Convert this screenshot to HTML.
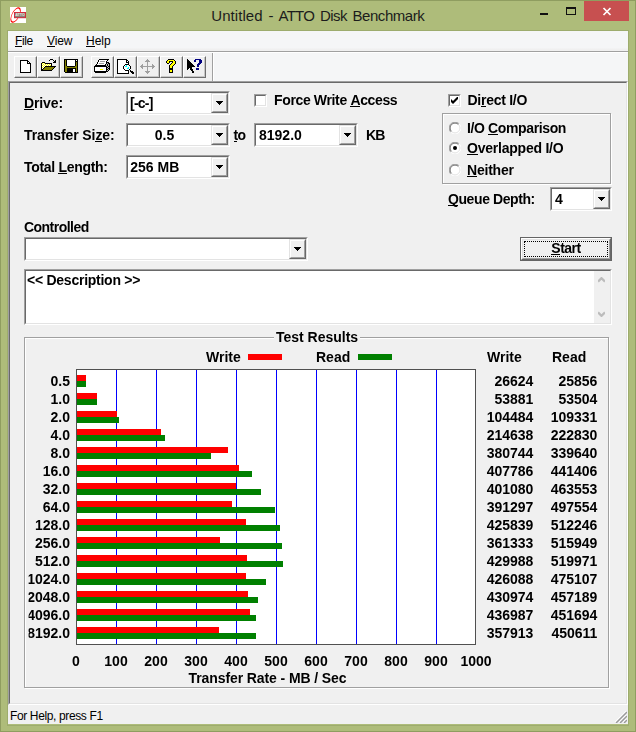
<!DOCTYPE html>
<html lang="en"><head><meta charset="utf-8"><title>Untitled - ATTO Disk Benchmark</title>
<style>
html,body{margin:0;padding:0}
body{width:636px;height:732px;overflow:hidden;background:#aebc7a;position:relative;font-family:"Liberation Sans",sans-serif;}
#win{position:absolute;left:0;top:0;width:636px;height:732px;background:#aebc7a;box-shadow:inset 0 0 0 1px #8f9d60}
.abs,.t,.bar,.grid,#win div,#win span.a{position:absolute}
.t{font:bold 14px/16px "Liberation Sans",sans-serif;color:#000;white-space:pre}
u{text-decoration:none;border-bottom:1px solid #000;display:inline-block;line-height:12px}
#title{left:0;top:6px;width:636px;height:20px;font:15px/20px "Liberation Sans",sans-serif;color:#1c1c1c}
.tw{top:0;white-space:pre}
#menubar{left:8px;top:31px;width:620px;height:20px;background:linear-gradient(#f5f6f7,#f5f6f7 17px,#f0f0f0 18px)}
.mi{top:2px;font:12px/16px "Liberation Sans",sans-serif;color:#000}
#tbsep1{left:8px;top:51px;width:620px;height:1px;background:#a0a0a0}
#tbsep2{left:8px;top:52px;width:620px;height:1px;background:#fff}
#toolbar{left:8px;top:53px;width:620px;height:28px;background:#f5f6f7}
#tbin{left:0;top:0;width:204px;height:28px;background:#f0f0f0;border-right:1px solid #a0a0a0;box-shadow:1px 0 0 #fff}
.tb{top:56px;width:21px;height:20px;border:1px solid;border-color:#fff #6e6e6e #6e6e6e #fff;background:#f0f0f0;box-shadow:inset -1px -1px 0 #c6c6c6}
#client{left:8px;top:81px;width:616px;height:620px;background:#f0f0f0;border:2px solid;border-color:#a0a0a0 #fff #fff #a0a0a0}
#client:before{content:"";position:absolute;left:-1px;top:-1px;right:-1px;bottom:-1px;border:1px solid;border-color:#696969 #e3e3e3 #e3e3e3 #696969}
#status{left:8px;top:705px;width:620px;height:19px;background:#f0f0f0}
#stext{left:2px;top:3px;font:12px/16px "Liberation Sans",sans-serif;letter-spacing:-0.37px;white-space:pre}
.combo{height:20px;background:#fff;border:2px solid;border-color:#a0a0a0 #fff #fff #a0a0a0}
.combo:before{content:"";position:absolute;left:-1px;top:-1px;right:-1px;bottom:-1px;border:1px solid;border-color:#696969 #e3e3e3 #e3e3e3 #696969}
.cbtn{right:0;top:0;width:13px;height:16px;background:#f0f0f0;border:2px solid;border-color:#fff #a0a0a0 #a0a0a0 #fff;outline:0}
.cbtn:before{content:"";position:absolute;left:-2px;top:-2px;right:-2px;bottom:-2px;border:1px solid;border-color:#e3e3e3 #696969 #696969 #e3e3e3}
.cbtn:after{content:"";position:absolute;left:3px;top:6px;width:7px;height:4px;background:#000;clip-path:polygon(0 0,7px 0,7px 1px,6px 1px,6px 2px,5px 2px,5px 3px,4px 3px,4px 4px,3px 4px,3px 3px,2px 3px,2px 2px,1px 2px,1px 1px,0 1px)}
.ctext{left:3px;top:2px}
.bar{left:77px;height:6px}
.r{background:#f00}.g{background:#008000}
.grid{top:370px;width:1px;height:274px;background:#00f}
.lab{left:0;width:70px;text-align:right;clip-path:inset(0 0 0 28.6px)}
.wv{left:433.4px;width:100px;text-align:right}
.rv{left:497.4px;width:100px;text-align:right}
.ax{top:653px;width:60px;text-align:center}
.gb{border:1px solid #a0a0a0;box-shadow:1px 1px 0 #fff, inset 1px 1px 0 #fff}

.chk{width:11px;height:11px;background:#fff;border:1px solid;border-color:#a0a0a0 #fff #fff #a0a0a0}
.chk:before{content:"";position:absolute;left:0;top:0;right:0;bottom:0;border:1px solid;border-color:#696969 #e3e3e3 #e3e3e3 #696969}
.radio{width:12px;height:12px}
.etch{border:1px solid #a0a0a0;box-shadow:1px 1px 0 #fff, inset 1px 1px 0 #fff}
.sunk{background:#fff;border:2px solid;border-color:#a0a0a0 #fff #fff #a0a0a0}
.sunk:before{content:"";position:absolute;left:-1px;top:-1px;right:-1px;bottom:-1px;border:1px solid;border-color:#696969 #e3e3e3 #e3e3e3 #696969}
#start{left:520px;top:237px;width:90px;height:22px;border:1px solid #646464;background:#f0f0f0}
#start:before{content:"";position:absolute;left:0;top:0;right:0;bottom:0;border:1px solid;border-color:#fff #696969 #696969 #fff}
#start:after{content:"";position:absolute;left:1px;top:1px;right:1px;bottom:1px;border:1px solid;border-color:#e3e3e3 #a0a0a0 #a0a0a0 #e3e3e3}
#focus{left:3px;top:3px;right:3px;bottom:3px;border:1px dotted #000}

#close{left:584px;top:1px;width:45px;height:20px;background:#c75050}
.mi u{line-height:10px}
#dlg{left:0;top:0;width:636px;height:732px;will-change:transform}

</style></head>
<body>
<div id="win">
<div id="title"><span class="a tw" style="left:211.3px;letter-spacing:0.055px">Untitled</span> <span class="a tw" style="left:268.5px;letter-spacing:-0.300px">-</span> <span class="a tw" style="left:278.6px;letter-spacing:-0.800px">ATTO</span> <span class="a tw" style="left:319.9px;letter-spacing:-0.543px">Disk</span> <span class="a tw" style="left:352.6px;letter-spacing:-0.475px">Benchmark</span></div>
<svg class="abs" style="left:10px;top:7px" width="16" height="16" viewBox="0 0 16 16"><rect width="16" height="16" fill="#fff"/><g transform="rotate(27 5.6 8)"><path fill-rule="evenodd" fill="#f00" d="M1.7 8a3.9 8.5 0 1 0 7.8 0a3.9 8.5 0 1 0 -7.8 0zM2.25 8a3.35 7.1 0 1 0 6.7 0a3.35 7.1 0 1 0 -6.7 0z"/></g><rect x="4" y="5" width="12" height="6.2" fill="#d32c3c"/><rect x="5" y="6" width="10" height="4.2" fill="#8c8078"/><text x="10" y="9.4" font-family="Liberation Sans, sans-serif" font-weight="bold" font-size="3.6" text-anchor="middle" fill="#eee6e0">ATTO</text></svg>
<div style="left:540px;top:13px;width:8px;height:2px;background:#111"></div>
<div style="left:566px;top:7px;width:8px;height:5px;border:1px solid #111;border-top-width:2px"></div>
<div id="close"><svg class="abs" style="left:18px;top:6px" width="10" height="9" viewBox="0 0 10 9"><path d="M1.5 1L8.5 8M8.5 1L1.5 8" stroke="#fff" stroke-width="1.7" fill="none"/></svg></div>
<div style="left:7px;top:30px;width:620px;height:694px;border:1px solid #9dac6d"></div>
<div id="menubar"><span class="a mi" style="left:7px;letter-spacing:-0.35px"><u>F</u>ile</span><span class="a mi" style="left:39px;letter-spacing:-0.2px"><u>V</u>iew</span><span class="a mi" style="left:78px"><u>H</u>elp</span></div>
<div id="tbsep1"></div><div id="tbsep2"></div>
<div id="toolbar"><div id="tbin"></div></div>
<div class="tb" style="left:14px"></div><div class="tb" style="left:37px"></div><div class="tb" style="left:60px"></div>
<div class="tb" style="left:91px"></div><div class="tb" style="left:114px"></div><div class="tb" style="left:137px"></div><div class="tb" style="left:160px"></div><div class="tb" style="left:183px"></div>
<svg class="abs" style="left:20px;top:60px" width="11" height="13" viewBox="0 0 11 13" shape-rendering="crispEdges"><rect x="0" y="0" width="8" height="1" fill="#000"/><rect x="0" y="1" width="1" height="1" fill="#000"/><rect x="1" y="1" width="6" height="1" fill="#fff"/><rect x="7" y="1" width="2" height="1" fill="#000"/><rect x="0" y="2" width="1" height="1" fill="#000"/><rect x="1" y="2" width="6" height="1" fill="#fff"/><rect x="7" y="2" width="1" height="1" fill="#000"/><rect x="8" y="2" width="1" height="1" fill="#fff"/><rect x="9" y="2" width="1" height="1" fill="#000"/><rect x="0" y="3" width="1" height="1" fill="#000"/><rect x="1" y="3" width="6" height="1" fill="#fff"/><rect x="7" y="3" width="4" height="1" fill="#000"/><rect x="0" y="4" width="1" height="1" fill="#000"/><rect x="1" y="4" width="9" height="1" fill="#fff"/><rect x="10" y="4" width="1" height="1" fill="#000"/><rect x="0" y="5" width="1" height="1" fill="#000"/><rect x="1" y="5" width="9" height="1" fill="#fff"/><rect x="10" y="5" width="1" height="1" fill="#000"/><rect x="0" y="6" width="1" height="1" fill="#000"/><rect x="1" y="6" width="9" height="1" fill="#fff"/><rect x="10" y="6" width="1" height="1" fill="#000"/><rect x="0" y="7" width="1" height="1" fill="#000"/><rect x="1" y="7" width="9" height="1" fill="#fff"/><rect x="10" y="7" width="1" height="1" fill="#000"/><rect x="0" y="8" width="1" height="1" fill="#000"/><rect x="1" y="8" width="9" height="1" fill="#fff"/><rect x="10" y="8" width="1" height="1" fill="#000"/><rect x="0" y="9" width="1" height="1" fill="#000"/><rect x="1" y="9" width="9" height="1" fill="#fff"/><rect x="10" y="9" width="1" height="1" fill="#000"/><rect x="0" y="10" width="1" height="1" fill="#000"/><rect x="1" y="10" width="9" height="1" fill="#fff"/><rect x="10" y="10" width="1" height="1" fill="#000"/><rect x="0" y="11" width="1" height="1" fill="#000"/><rect x="1" y="11" width="9" height="1" fill="#fff"/><rect x="10" y="11" width="1" height="1" fill="#000"/><rect x="0" y="12" width="11" height="1" fill="#000"/></svg><svg class="abs" style="left:41px;top:59px" width="16" height="12" viewBox="0 0 16 12" shape-rendering="crispEdges"><rect x="9" y="0" width="3" height="1" fill="#000"/><rect x="8" y="1" width="1" height="1" fill="#000"/><rect x="12" y="1" width="1" height="1" fill="#000"/><rect x="14" y="1" width="1" height="1" fill="#000"/><rect x="13" y="2" width="2" height="1" fill="#000"/><rect x="1" y="3" width="3" height="1" fill="#000"/><rect x="12" y="3" width="3" height="1" fill="#000"/><rect x="0" y="4" width="1" height="1" fill="#000"/><rect x="1" y="4" width="1" height="1" fill="#ff0"/><rect x="2" y="4" width="1" height="1" fill="#fff"/><rect x="3" y="4" width="1" height="1" fill="#ff0"/><rect x="4" y="4" width="7" height="1" fill="#000"/><rect x="0" y="5" width="1" height="1" fill="#000"/><rect x="1" y="5" width="1" height="1" fill="#fff"/><rect x="2" y="5" width="1" height="1" fill="#ff0"/><rect x="3" y="5" width="1" height="1" fill="#fff"/><rect x="4" y="5" width="1" height="1" fill="#ff0"/><rect x="5" y="5" width="1" height="1" fill="#fff"/><rect x="6" y="5" width="1" height="1" fill="#ff0"/><rect x="7" y="5" width="1" height="1" fill="#fff"/><rect x="8" y="5" width="1" height="1" fill="#ff0"/><rect x="9" y="5" width="1" height="1" fill="#fff"/><rect x="10" y="5" width="1" height="1" fill="#000"/><rect x="0" y="6" width="1" height="1" fill="#000"/><rect x="1" y="6" width="1" height="1" fill="#ff0"/><rect x="2" y="6" width="1" height="1" fill="#fff"/><rect x="3" y="6" width="1" height="1" fill="#ff0"/><rect x="4" y="6" width="1" height="1" fill="#fff"/><rect x="5" y="6" width="1" height="1" fill="#ff0"/><rect x="6" y="6" width="1" height="1" fill="#fff"/><rect x="7" y="6" width="1" height="1" fill="#ff0"/><rect x="8" y="6" width="1" height="1" fill="#fff"/><rect x="9" y="6" width="1" height="1" fill="#ff0"/><rect x="10" y="6" width="1" height="1" fill="#000"/><rect x="0" y="7" width="1" height="1" fill="#000"/><rect x="1" y="7" width="1" height="1" fill="#fff"/><rect x="2" y="7" width="1" height="1" fill="#ff0"/><rect x="3" y="7" width="1" height="1" fill="#fff"/><rect x="4" y="7" width="11" height="1" fill="#000"/><rect x="0" y="8" width="1" height="1" fill="#000"/><rect x="1" y="8" width="1" height="1" fill="#ff0"/><rect x="2" y="8" width="1" height="1" fill="#fff"/><rect x="3" y="8" width="1" height="1" fill="#000"/><rect x="4" y="8" width="9" height="1" fill="#808000"/><rect x="13" y="8" width="1" height="1" fill="#000"/><rect x="0" y="9" width="1" height="1" fill="#000"/><rect x="1" y="9" width="1" height="1" fill="#fff"/><rect x="2" y="9" width="1" height="1" fill="#000"/><rect x="3" y="9" width="9" height="1" fill="#808000"/><rect x="12" y="9" width="1" height="1" fill="#000"/><rect x="0" y="10" width="2" height="1" fill="#000"/><rect x="2" y="10" width="9" height="1" fill="#808000"/><rect x="11" y="10" width="1" height="1" fill="#000"/><rect x="0" y="11" width="11" height="1" fill="#000"/></svg><svg class="abs" style="left:64px;top:59px" width="14" height="14" viewBox="0 0 14 14" shape-rendering="crispEdges"><rect x="0" y="0" width="14" height="1" fill="#000"/><rect x="0" y="1" width="1" height="1" fill="#000"/><rect x="1" y="1" width="1" height="1" fill="#808000"/><rect x="2" y="1" width="1" height="1" fill="#000"/><rect x="3" y="1" width="8" height="1" fill="#fff"/><rect x="11" y="1" width="1" height="1" fill="#000"/><rect x="12" y="1" width="1" height="1" fill="#fff"/><rect x="13" y="1" width="1" height="1" fill="#000"/><rect x="0" y="2" width="1" height="1" fill="#000"/><rect x="1" y="2" width="1" height="1" fill="#808000"/><rect x="2" y="2" width="1" height="1" fill="#000"/><rect x="3" y="2" width="8" height="1" fill="#fff"/><rect x="11" y="2" width="3" height="1" fill="#000"/><rect x="0" y="3" width="1" height="1" fill="#000"/><rect x="1" y="3" width="1" height="1" fill="#808000"/><rect x="2" y="3" width="1" height="1" fill="#000"/><rect x="3" y="3" width="8" height="1" fill="#fff"/><rect x="11" y="3" width="1" height="1" fill="#000"/><rect x="12" y="3" width="1" height="1" fill="#808000"/><rect x="13" y="3" width="1" height="1" fill="#000"/><rect x="0" y="4" width="1" height="1" fill="#000"/><rect x="1" y="4" width="1" height="1" fill="#808000"/><rect x="2" y="4" width="1" height="1" fill="#000"/><rect x="3" y="4" width="8" height="1" fill="#fff"/><rect x="11" y="4" width="1" height="1" fill="#000"/><rect x="12" y="4" width="1" height="1" fill="#808000"/><rect x="13" y="4" width="1" height="1" fill="#000"/><rect x="0" y="5" width="1" height="1" fill="#000"/><rect x="1" y="5" width="1" height="1" fill="#808000"/><rect x="2" y="5" width="1" height="1" fill="#000"/><rect x="3" y="5" width="8" height="1" fill="#fff"/><rect x="11" y="5" width="1" height="1" fill="#000"/><rect x="12" y="5" width="1" height="1" fill="#808000"/><rect x="13" y="5" width="1" height="1" fill="#000"/><rect x="0" y="6" width="1" height="1" fill="#000"/><rect x="1" y="6" width="1" height="1" fill="#808000"/><rect x="2" y="6" width="1" height="1" fill="#000"/><rect x="3" y="6" width="8" height="1" fill="#fff"/><rect x="11" y="6" width="1" height="1" fill="#000"/><rect x="12" y="6" width="1" height="1" fill="#808000"/><rect x="13" y="6" width="1" height="1" fill="#000"/><rect x="0" y="7" width="1" height="1" fill="#000"/><rect x="1" y="7" width="2" height="1" fill="#808000"/><rect x="3" y="7" width="8" height="1" fill="#000"/><rect x="11" y="7" width="2" height="1" fill="#808000"/><rect x="13" y="7" width="1" height="1" fill="#000"/><rect x="0" y="8" width="1" height="1" fill="#000"/><rect x="1" y="8" width="12" height="1" fill="#808000"/><rect x="13" y="8" width="1" height="1" fill="#000"/><rect x="0" y="9" width="1" height="1" fill="#000"/><rect x="1" y="9" width="2" height="1" fill="#808000"/><rect x="3" y="9" width="9" height="1" fill="#000"/><rect x="12" y="9" width="1" height="1" fill="#808000"/><rect x="13" y="9" width="1" height="1" fill="#000"/><rect x="0" y="10" width="1" height="1" fill="#000"/><rect x="1" y="10" width="2" height="1" fill="#808000"/><rect x="3" y="10" width="6" height="1" fill="#000"/><rect x="9" y="10" width="2" height="1" fill="#fff"/><rect x="11" y="10" width="1" height="1" fill="#000"/><rect x="12" y="10" width="1" height="1" fill="#808000"/><rect x="13" y="10" width="1" height="1" fill="#000"/><rect x="0" y="11" width="1" height="1" fill="#000"/><rect x="1" y="11" width="2" height="1" fill="#808000"/><rect x="3" y="11" width="6" height="1" fill="#000"/><rect x="9" y="11" width="2" height="1" fill="#fff"/><rect x="11" y="11" width="1" height="1" fill="#000"/><rect x="12" y="11" width="1" height="1" fill="#808000"/><rect x="13" y="11" width="1" height="1" fill="#000"/><rect x="0" y="12" width="1" height="1" fill="#000"/><rect x="1" y="12" width="2" height="1" fill="#808000"/><rect x="3" y="12" width="6" height="1" fill="#000"/><rect x="9" y="12" width="2" height="1" fill="#fff"/><rect x="11" y="12" width="1" height="1" fill="#000"/><rect x="12" y="12" width="1" height="1" fill="#808000"/><rect x="13" y="12" width="1" height="1" fill="#000"/><rect x="1" y="13" width="13" height="1" fill="#000"/></svg><svg class="abs" style="left:94px;top:59px" width="16" height="14" viewBox="0 0 16 14" shape-rendering="crispEdges"><rect x="5" y="0" width="10" height="1" fill="#000"/><rect x="4" y="1" width="1" height="1" fill="#000"/><rect x="5" y="1" width="8" height="1" fill="#fff"/><rect x="13" y="1" width="1" height="1" fill="#000"/><rect x="4" y="2" width="1" height="1" fill="#000"/><rect x="5" y="2" width="1" height="1" fill="#fff"/><rect x="6" y="2" width="5" height="1" fill="#a0a0a0"/><rect x="11" y="2" width="1" height="1" fill="#fff"/><rect x="12" y="2" width="1" height="1" fill="#000"/><rect x="3" y="3" width="1" height="1" fill="#000"/><rect x="4" y="3" width="8" height="1" fill="#fff"/><rect x="12" y="3" width="3" height="1" fill="#000"/><rect x="3" y="4" width="1" height="1" fill="#000"/><rect x="4" y="4" width="1" height="1" fill="#fff"/><rect x="5" y="4" width="5" height="1" fill="#a0a0a0"/><rect x="10" y="4" width="2" height="1" fill="#fff"/><rect x="12" y="4" width="1" height="1" fill="#000"/><rect x="13" y="4" width="1" height="1" fill="#c0c0c0"/><rect x="14" y="4" width="2" height="1" fill="#000"/><rect x="2" y="5" width="1" height="1" fill="#000"/><rect x="3" y="5" width="8" height="1" fill="#fff"/><rect x="11" y="5" width="1" height="1" fill="#000"/><rect x="12" y="5" width="1" height="1" fill="#c0c0c0"/><rect x="13" y="5" width="1" height="1" fill="#000"/><rect x="14" y="5" width="1" height="1" fill="#c0c0c0"/><rect x="15" y="5" width="1" height="1" fill="#000"/><rect x="1" y="6" width="11" height="1" fill="#000"/><rect x="12" y="6" width="1" height="1" fill="#c0c0c0"/><rect x="13" y="6" width="1" height="1" fill="#000"/><rect x="14" y="6" width="1" height="1" fill="#c0c0c0"/><rect x="15" y="6" width="1" height="1" fill="#000"/><rect x="0" y="7" width="13" height="1" fill="#000"/><rect x="13" y="7" width="1" height="1" fill="#c0c0c0"/><rect x="14" y="7" width="2" height="1" fill="#000"/><rect x="0" y="8" width="1" height="1" fill="#000"/><rect x="1" y="8" width="11" height="1" fill="#fff"/><rect x="12" y="8" width="2" height="1" fill="#000"/><rect x="14" y="8" width="1" height="1" fill="#c0c0c0"/><rect x="15" y="8" width="1" height="1" fill="#000"/><rect x="0" y="9" width="1" height="1" fill="#000"/><rect x="1" y="9" width="11" height="1" fill="#fff"/><rect x="12" y="9" width="1" height="1" fill="#000"/><rect x="13" y="9" width="1" height="1" fill="#c0c0c0"/><rect x="14" y="9" width="2" height="1" fill="#000"/><rect x="0" y="10" width="1" height="1" fill="#000"/><rect x="1" y="10" width="5" height="1" fill="#fff"/><rect x="6" y="10" width="3" height="1" fill="#ff0"/><rect x="9" y="10" width="3" height="1" fill="#fff"/><rect x="12" y="10" width="2" height="1" fill="#000"/><rect x="14" y="10" width="1" height="1" fill="#c0c0c0"/><rect x="15" y="10" width="1" height="1" fill="#000"/><rect x="0" y="11" width="1" height="1" fill="#000"/><rect x="1" y="11" width="11" height="1" fill="#fff"/><rect x="12" y="11" width="1" height="1" fill="#000"/><rect x="13" y="11" width="1" height="1" fill="#c0c0c0"/><rect x="14" y="11" width="1" height="1" fill="#000"/><rect x="0" y="12" width="14" height="1" fill="#000"/><rect x="1" y="13" width="11" height="1" fill="#000"/></svg><svg class="abs" style="left:117px;top:59px" width="17" height="15" viewBox="0 0 17 15" shape-rendering="crispEdges"><rect x="0" y="0" width="10" height="1" fill="#000"/><rect x="0" y="1" width="1" height="1" fill="#000"/><rect x="1" y="1" width="8" height="1" fill="#fff"/><rect x="9" y="1" width="2" height="1" fill="#000"/><rect x="0" y="2" width="1" height="1" fill="#000"/><rect x="1" y="2" width="8" height="1" fill="#fff"/><rect x="9" y="2" width="1" height="1" fill="#000"/><rect x="10" y="2" width="1" height="1" fill="#fff"/><rect x="11" y="2" width="1" height="1" fill="#000"/><rect x="0" y="3" width="1" height="1" fill="#000"/><rect x="1" y="3" width="8" height="1" fill="#fff"/><rect x="9" y="3" width="3" height="1" fill="#000"/><rect x="0" y="4" width="1" height="1" fill="#000"/><rect x="1" y="4" width="10" height="1" fill="#fff"/><rect x="11" y="4" width="1" height="1" fill="#000"/><rect x="0" y="5" width="1" height="1" fill="#000"/><rect x="1" y="5" width="7" height="1" fill="#fff"/><rect x="8" y="5" width="4" height="1" fill="#000"/><rect x="0" y="6" width="1" height="1" fill="#000"/><rect x="1" y="6" width="6" height="1" fill="#fff"/><rect x="7" y="6" width="1" height="1" fill="#000"/><rect x="8" y="6" width="1" height="1" fill="#fff"/><rect x="9" y="6" width="1" height="1" fill="#0ff"/><rect x="10" y="6" width="2" height="1" fill="#fff"/><rect x="12" y="6" width="1" height="1" fill="#000"/><rect x="0" y="7" width="1" height="1" fill="#000"/><rect x="1" y="7" width="5" height="1" fill="#fff"/><rect x="6" y="7" width="1" height="1" fill="#000"/><rect x="7" y="7" width="1" height="1" fill="#fff"/><rect x="8" y="7" width="2" height="1" fill="#0ff"/><rect x="10" y="7" width="3" height="1" fill="#fff"/><rect x="13" y="7" width="1" height="1" fill="#000"/><rect x="0" y="8" width="1" height="1" fill="#000"/><rect x="1" y="8" width="5" height="1" fill="#fff"/><rect x="6" y="8" width="1" height="1" fill="#000"/><rect x="7" y="8" width="4" height="1" fill="#fff"/><rect x="11" y="8" width="1" height="1" fill="#0ff"/><rect x="12" y="8" width="1" height="1" fill="#fff"/><rect x="13" y="8" width="1" height="1" fill="#000"/><rect x="0" y="9" width="1" height="1" fill="#000"/><rect x="1" y="9" width="5" height="1" fill="#fff"/><rect x="6" y="9" width="1" height="1" fill="#000"/><rect x="7" y="9" width="3" height="1" fill="#fff"/><rect x="10" y="9" width="2" height="1" fill="#0ff"/><rect x="12" y="9" width="1" height="1" fill="#fff"/><rect x="13" y="9" width="1" height="1" fill="#000"/><rect x="0" y="10" width="1" height="1" fill="#000"/><rect x="1" y="10" width="6" height="1" fill="#fff"/><rect x="7" y="10" width="1" height="1" fill="#000"/><rect x="8" y="10" width="4" height="1" fill="#fff"/><rect x="12" y="10" width="1" height="1" fill="#000"/><rect x="0" y="11" width="1" height="1" fill="#000"/><rect x="1" y="11" width="7" height="1" fill="#fff"/><rect x="8" y="11" width="4" height="1" fill="#000"/><rect x="13" y="11" width="1" height="1" fill="#000"/><rect x="0" y="12" width="1" height="1" fill="#000"/><rect x="1" y="12" width="10" height="1" fill="#fff"/><rect x="11" y="12" width="1" height="1" fill="#000"/><rect x="13" y="12" width="3" height="1" fill="#000"/><rect x="0" y="13" width="1" height="1" fill="#000"/><rect x="1" y="13" width="10" height="1" fill="#fff"/><rect x="11" y="13" width="1" height="1" fill="#000"/><rect x="14" y="13" width="3" height="1" fill="#000"/><rect x="0" y="14" width="12" height="1" fill="#000"/><rect x="15" y="14" width="2" height="1" fill="#000"/></svg><svg class="abs" style="left:140px;top:59px" width="15" height="15" viewBox="0 0 15 15" shape-rendering="crispEdges"><rect x="7" y="0" width="1" height="1" fill="#a0a0a0"/><rect x="6" y="1" width="3" height="1" fill="#a0a0a0"/><rect x="5" y="2" width="5" height="1" fill="#a0a0a0"/><rect x="7" y="3" width="1" height="1" fill="#a0a0a0"/><rect x="7" y="4" width="1" height="1" fill="#a0a0a0"/><rect x="2" y="5" width="1" height="1" fill="#a0a0a0"/><rect x="7" y="5" width="1" height="1" fill="#a0a0a0"/><rect x="12" y="5" width="1" height="1" fill="#a0a0a0"/><rect x="1" y="6" width="2" height="1" fill="#a0a0a0"/><rect x="7" y="6" width="1" height="1" fill="#a0a0a0"/><rect x="12" y="6" width="2" height="1" fill="#a0a0a0"/><rect x="0" y="7" width="15" height="1" fill="#a0a0a0"/><rect x="1" y="8" width="2" height="1" fill="#a0a0a0"/><rect x="7" y="8" width="1" height="1" fill="#a0a0a0"/><rect x="12" y="8" width="2" height="1" fill="#a0a0a0"/><rect x="2" y="9" width="1" height="1" fill="#a0a0a0"/><rect x="7" y="9" width="1" height="1" fill="#a0a0a0"/><rect x="12" y="9" width="1" height="1" fill="#a0a0a0"/><rect x="7" y="10" width="1" height="1" fill="#a0a0a0"/><rect x="7" y="11" width="1" height="1" fill="#a0a0a0"/><rect x="5" y="12" width="5" height="1" fill="#a0a0a0"/><rect x="6" y="13" width="3" height="1" fill="#a0a0a0"/><rect x="7" y="14" width="1" height="1" fill="#a0a0a0"/></svg><svg class="abs" style="left:166px;top:59px" width="10" height="14" viewBox="0 0 10 14" shape-rendering="crispEdges"><rect x="2" y="0" width="6" height="1" fill="#000"/><rect x="1" y="1" width="1" height="1" fill="#000"/><rect x="2" y="1" width="6" height="1" fill="#ff0"/><rect x="8" y="1" width="1" height="1" fill="#000"/><rect x="0" y="2" width="1" height="1" fill="#000"/><rect x="1" y="2" width="2" height="1" fill="#ff0"/><rect x="3" y="2" width="4" height="1" fill="#000"/><rect x="7" y="2" width="2" height="1" fill="#ff0"/><rect x="9" y="2" width="1" height="1" fill="#000"/><rect x="0" y="3" width="1" height="1" fill="#000"/><rect x="1" y="3" width="2" height="1" fill="#ff0"/><rect x="3" y="3" width="1" height="1" fill="#000"/><rect x="6" y="3" width="1" height="1" fill="#000"/><rect x="7" y="3" width="2" height="1" fill="#ff0"/><rect x="9" y="3" width="1" height="1" fill="#000"/><rect x="1" y="4" width="2" height="1" fill="#000"/><rect x="5" y="4" width="1" height="1" fill="#000"/><rect x="6" y="4" width="3" height="1" fill="#ff0"/><rect x="9" y="4" width="1" height="1" fill="#000"/><rect x="4" y="5" width="1" height="1" fill="#000"/><rect x="5" y="5" width="3" height="1" fill="#ff0"/><rect x="8" y="5" width="1" height="1" fill="#000"/><rect x="3" y="6" width="1" height="1" fill="#000"/><rect x="4" y="6" width="3" height="1" fill="#ff0"/><rect x="7" y="6" width="1" height="1" fill="#000"/><rect x="3" y="7" width="1" height="1" fill="#000"/><rect x="4" y="7" width="2" height="1" fill="#ff0"/><rect x="6" y="7" width="1" height="1" fill="#000"/><rect x="3" y="8" width="1" height="1" fill="#000"/><rect x="4" y="8" width="2" height="1" fill="#ff0"/><rect x="6" y="8" width="1" height="1" fill="#000"/><rect x="3" y="9" width="4" height="1" fill="#000"/><rect x="3" y="10" width="4" height="1" fill="#000"/><rect x="3" y="11" width="1" height="1" fill="#000"/><rect x="4" y="11" width="2" height="1" fill="#ff0"/><rect x="6" y="11" width="1" height="1" fill="#000"/><rect x="3" y="12" width="1" height="1" fill="#000"/><rect x="4" y="12" width="2" height="1" fill="#ff0"/><rect x="6" y="12" width="1" height="1" fill="#000"/><rect x="3" y="13" width="4" height="1" fill="#000"/></svg><svg class="abs" style="left:187px;top:59px" width="16" height="14" viewBox="0 0 16 14" shape-rendering="crispEdges"><rect x="0" y="0" width="1" height="1" fill="#000"/><rect x="8" y="0" width="6" height="1" fill="#000080"/><rect x="0" y="1" width="2" height="1" fill="#000"/><rect x="7" y="1" width="2" height="1" fill="#000080"/><rect x="12" y="1" width="3" height="1" fill="#000080"/><rect x="0" y="2" width="3" height="1" fill="#000"/><rect x="7" y="2" width="2" height="1" fill="#000080"/><rect x="12" y="2" width="3" height="1" fill="#000080"/><rect x="0" y="3" width="4" height="1" fill="#000"/><rect x="12" y="3" width="3" height="1" fill="#000080"/><rect x="0" y="4" width="5" height="1" fill="#000"/><rect x="11" y="4" width="3" height="1" fill="#000080"/><rect x="0" y="5" width="6" height="1" fill="#000"/><rect x="10" y="5" width="3" height="1" fill="#000080"/><rect x="0" y="6" width="7" height="1" fill="#000"/><rect x="10" y="6" width="2" height="1" fill="#000080"/><rect x="0" y="7" width="8" height="1" fill="#000"/><rect x="10" y="7" width="2" height="1" fill="#000080"/><rect x="0" y="8" width="5" height="1" fill="#000"/><rect x="0" y="9" width="2" height="1" fill="#000"/><rect x="3" y="9" width="2" height="1" fill="#000"/><rect x="9" y="9" width="3" height="1" fill="#000080"/><rect x="0" y="10" width="1" height="1" fill="#000"/><rect x="3" y="10" width="3" height="1" fill="#000"/><rect x="9" y="10" width="3" height="1" fill="#000080"/><rect x="4" y="11" width="2" height="1" fill="#000"/><rect x="5" y="12" width="2" height="1" fill="#000"/><rect x="5" y="13" width="2" height="1" fill="#000"/></svg>
<div id="client"></div>
<div id="status"><svg class="abs" style="left:607px;top:6px" width="12" height="12" viewBox="0 0 12 12"><path d="M0 11.5L11.5 0M4 11.5L11.5 4M8 11.5L11.5 8" stroke="#fff" stroke-width="1.4" fill="none"/><path d="M1 12L12 1M5 12L12 5M9 12L12 9" stroke="#9a9a9a" stroke-width="1.5" fill="none"/></svg><span class="a" id="stext">For Help, press F1</span></div>
<div id="dlg">

<div class="t" style="left:24px;top:95px;letter-spacing:-0.117px"><u>D</u>rive:</div>
<div class="t" style="left:24px;top:127px;letter-spacing:-0.088px">Transfer Si<u>z</u>e:</div>
<div class="t" style="left:24px;top:159px;letter-spacing:-0.302px">Total <u>L</u>ength:</div>
<div class="combo" style="left:126px;top:91px;width:100px"><span class="a t ctext" style="left:2px;letter-spacing:-0.767px">[-c-]</span><div class="cbtn"></div></div>
<div class="combo" style="left:126px;top:123px;width:100px"><span class="a t ctext" style="left:-5px;width:83px;text-align:center">0.5</span><div class="cbtn"></div></div>
<div class="combo" style="left:126px;top:155px;width:100px"><span class="a t ctext" style="left:2.3px">256 MB</span><div class="cbtn"></div></div>
<div class="t" style="left:233.6px;top:127px;letter-spacing:-0.800px"><u>t</u>o</div>

<div class="chk" style="left:254px;top:94px"></div>
<div class="t" style="left:274px;top:92px;letter-spacing:-0.357px">Force Write <u>A</u>ccess</div>
<div class="combo" style="left:254px;top:123px;width:100px"><span class="a t ctext">8192.0</span><div class="cbtn"></div></div>
<div class="t" style="left:366px;top:127px;letter-spacing:-0.800px">KB</div>
<div class="chk" style="left:448px;top:94px"><svg class="abs" style="left:2px;top:2px" width="7" height="7" viewBox="0 0 7 7"><path d="M0 2v3l2 2 5-5V-1L2 4z" fill="#000"/></svg></div>
<div class="t" style="left:467.5px;top:92px;letter-spacing:-0.265px">Di<u>r</u>ect I/O</div>
<div class="etch" style="left:442px;top:113px;width:167px;height:69px"></div>
<svg class="abs radio" style="left:449px;top:122px" width="12" height="12" viewBox="0 0 12 12"><circle cx="6" cy="6" r="5.5" fill="#fff"/><path d="M10.2 1.8A5.5 5.5 0 0 0 1.8 10.2" fill="none" stroke="#a0a0a0" stroke-width="1"/><path d="M1.8 10.2A5.5 5.5 0 0 0 10.2 1.8" fill="none" stroke="#fff" stroke-width="1"/><path d="M9.5 2.5A4.5 4.5 0 0 0 2.5 9.5" fill="none" stroke="#696969" stroke-width="1"/><path d="M2.5 9.5A4.5 4.5 0 0 0 9.5 2.5" fill="none" stroke="#e3e3e3" stroke-width="1"/></svg><svg class="abs radio" style="left:449px;top:142px" width="12" height="12" viewBox="0 0 12 12"><circle cx="6" cy="6" r="5.5" fill="#fff"/><path d="M10.2 1.8A5.5 5.5 0 0 0 1.8 10.2" fill="none" stroke="#a0a0a0" stroke-width="1"/><path d="M1.8 10.2A5.5 5.5 0 0 0 10.2 1.8" fill="none" stroke="#fff" stroke-width="1"/><path d="M9.5 2.5A4.5 4.5 0 0 0 2.5 9.5" fill="none" stroke="#696969" stroke-width="1"/><path d="M2.5 9.5A4.5 4.5 0 0 0 9.5 2.5" fill="none" stroke="#e3e3e3" stroke-width="1"/><circle cx="6" cy="6" r="2" fill="#000"/></svg><svg class="abs radio" style="left:449px;top:164px" width="12" height="12" viewBox="0 0 12 12"><circle cx="6" cy="6" r="5.5" fill="#fff"/><path d="M10.2 1.8A5.5 5.5 0 0 0 1.8 10.2" fill="none" stroke="#a0a0a0" stroke-width="1"/><path d="M1.8 10.2A5.5 5.5 0 0 0 10.2 1.8" fill="none" stroke="#fff" stroke-width="1"/><path d="M9.5 2.5A4.5 4.5 0 0 0 2.5 9.5" fill="none" stroke="#696969" stroke-width="1"/><path d="M2.5 9.5A4.5 4.5 0 0 0 9.5 2.5" fill="none" stroke="#e3e3e3" stroke-width="1"/></svg>
<div class="t" style="left:467px;top:120px;letter-spacing:-0.376px">I/O <u>C</u>omparison</div>
<div class="t" style="left:467px;top:140px;letter-spacing:-0.228px"><u>O</u>verlapped I/O</div>
<div class="t" style="left:467px;top:162px;letter-spacing:-0.207px"><u>N</u>either</div>
<div class="t" style="left:448px;top:191px;letter-spacing:-0.415px"><u>Q</u>ueue Depth:</div>
<div class="combo" style="left:550px;top:187px;width:58px"><span class="a t ctext">4</span><div class="cbtn"></div></div>
<div class="t" style="left:24px;top:219px;letter-spacing:-0.530px">Controlled</div>
<div class="combo" style="left:24px;top:237px;width:280px"><div class="cbtn"></div></div>
<div id="start"><div id="focus"></div><div class="t" style="left:0;top:2px;width:90px;text-align:center;letter-spacing:-0.501px"><u>S</u>tart</div></div>
<div class="sunk" style="left:24px;top:269px;width:584px;height:52px"><div style="right:0;top:0;width:16px;height:52px;background:#f0f0f0"><svg class="abs" style="left:4px;top:6px" width="7" height="6" viewBox="0 0 7 6"><path d="M0 4.6L3.5 1.1L7 4.6" fill="none" stroke="#bcbcbc" stroke-width="2.2"/></svg><svg class="abs" style="left:4px;top:40px" width="7" height="6" viewBox="0 0 7 6"><path d="M0 1.4L3.5 4.9L7 1.4" fill="none" stroke="#bcbcbc" stroke-width="2.2"/></svg></div><span class="a t" style="left:1px;top:1px;letter-spacing:-0.253px">&lt;&lt; Description &gt;&gt;</span></div>

<div class="gb" style="left:24px;top:337px;width:583px;height:349px"></div>
<div class="t" style="left:274px;top:329px;width:86px;text-align:center;background:#f0f0f0">Test Results</div>
<div class="t" style="left:206px;top:349px">Write</div><div class="bar r" style="left:248px;top:354px;width:34px"></div>
<div class="t" style="left:316px;top:349px">Read</div><div class="bar g" style="left:358px;top:354px;width:34px"></div>
<div class="t" style="left:487px;top:349px">Write</div>
<div class="t" style="left:552px;top:349px">Read</div>
<div style="left:76px;top:369px;width:398px;height:274px;background:#fff;border:1px solid #505050"></div>
<div class="grid" style="left:116px"></div><div class="grid" style="left:156px"></div><div class="grid" style="left:196px"></div><div class="grid" style="left:236px"></div><div class="grid" style="left:276px"></div><div class="grid" style="left:316px"></div><div class="grid" style="left:356px"></div><div class="grid" style="left:396px"></div><div class="grid" style="left:436px"></div>
<div class="bar r" style="top:375px;width:9px"></div><div class="bar g" style="top:381px;width:9px"></div>
<div class="t lab" style="top:373px">0.5</div>
<div class="t wv" style="top:373px">26624</div><div class="t rv" style="top:373px">25856</div>
<div class="bar r" style="top:393px;width:20px"></div><div class="bar g" style="top:399px;width:20px"></div>
<div class="t lab" style="top:391px">1.0</div>
<div class="t wv" style="top:391px">53881</div><div class="t rv" style="top:391px">53504</div>
<div class="bar r" style="top:411px;width:40px"></div><div class="bar g" style="top:417px;width:42px"></div>
<div class="t lab" style="top:409px">2.0</div>
<div class="t wv" style="top:409px">104484</div><div class="t rv" style="top:409px">109331</div>
<div class="bar r" style="top:429px;width:84px"></div><div class="bar g" style="top:435px;width:88px"></div>
<div class="t lab" style="top:427px">4.0</div>
<div class="t wv" style="top:427px">214638</div><div class="t rv" style="top:427px">222830</div>
<div class="bar r" style="top:447px;width:151px"></div><div class="bar g" style="top:453px;width:134px"></div>
<div class="t lab" style="top:445px">8.0</div>
<div class="t wv" style="top:445px">380744</div><div class="t rv" style="top:445px">339640</div>
<div class="bar r" style="top:465px;width:162px"></div><div class="bar g" style="top:471px;width:175px"></div>
<div class="t lab" style="top:463px">16.0</div>
<div class="t wv" style="top:463px">407786</div><div class="t rv" style="top:463px">441406</div>
<div class="bar r" style="top:483px;width:159px"></div><div class="bar g" style="top:489px;width:184px"></div>
<div class="t lab" style="top:481px">32.0</div>
<div class="t wv" style="top:481px">401080</div><div class="t rv" style="top:481px">463553</div>
<div class="bar r" style="top:501px;width:155px"></div><div class="bar g" style="top:507px;width:198px"></div>
<div class="t lab" style="top:499px">64.0</div>
<div class="t wv" style="top:499px">391297</div><div class="t rv" style="top:499px">497554</div>
<div class="bar r" style="top:519px;width:169px"></div><div class="bar g" style="top:525px;width:203px"></div>
<div class="t lab" style="top:517px">128.0</div>
<div class="t wv" style="top:517px">425839</div><div class="t rv" style="top:517px">512246</div>
<div class="bar r" style="top:537px;width:143px"></div><div class="bar g" style="top:543px;width:205px"></div>
<div class="t lab" style="top:535px">256.0</div>
<div class="t wv" style="top:535px">361333</div><div class="t rv" style="top:535px">515949</div>
<div class="bar r" style="top:555px;width:170px"></div><div class="bar g" style="top:561px;width:206px"></div>
<div class="t lab" style="top:553px">512.0</div>
<div class="t wv" style="top:553px">429988</div><div class="t rv" style="top:553px">519971</div>
<div class="bar r" style="top:573px;width:169px"></div><div class="bar g" style="top:579px;width:189px"></div>
<div class="t lab" style="top:571px">1024.0</div>
<div class="t wv" style="top:571px">426088</div><div class="t rv" style="top:571px">475107</div>
<div class="bar r" style="top:591px;width:171px"></div><div class="bar g" style="top:597px;width:181px"></div>
<div class="t lab" style="top:589px">2048.0</div>
<div class="t wv" style="top:589px">430974</div><div class="t rv" style="top:589px">457189</div>
<div class="bar r" style="top:609px;width:173px"></div><div class="bar g" style="top:615px;width:179px"></div>
<div class="t lab" style="top:607px">4096.0</div>
<div class="t wv" style="top:607px">436987</div><div class="t rv" style="top:607px">451694</div>
<div class="bar r" style="top:627px;width:142px"></div><div class="bar g" style="top:633px;width:179px"></div>
<div class="t lab" style="top:625px">8192.0</div>
<div class="t wv" style="top:625px">357913</div><div class="t rv" style="top:625px">450611</div>
<div class="t ax" style="left:46px">0</div><div class="t ax" style="left:86px">100</div><div class="t ax" style="left:126px">200</div><div class="t ax" style="left:166px">300</div><div class="t ax" style="left:206px">400</div><div class="t ax" style="left:246px">500</div><div class="t ax" style="left:286px">600</div><div class="t ax" style="left:326px">700</div><div class="t ax" style="left:366px">800</div><div class="t ax" style="left:406px">900</div><div class="t ax" style="left:446px">1000</div>
<div class="t" style="left:188.5px;top:670px;letter-spacing:-0.095px">Transfer Rate - MB / Sec</div>
</div>
</div>

</body></html>
